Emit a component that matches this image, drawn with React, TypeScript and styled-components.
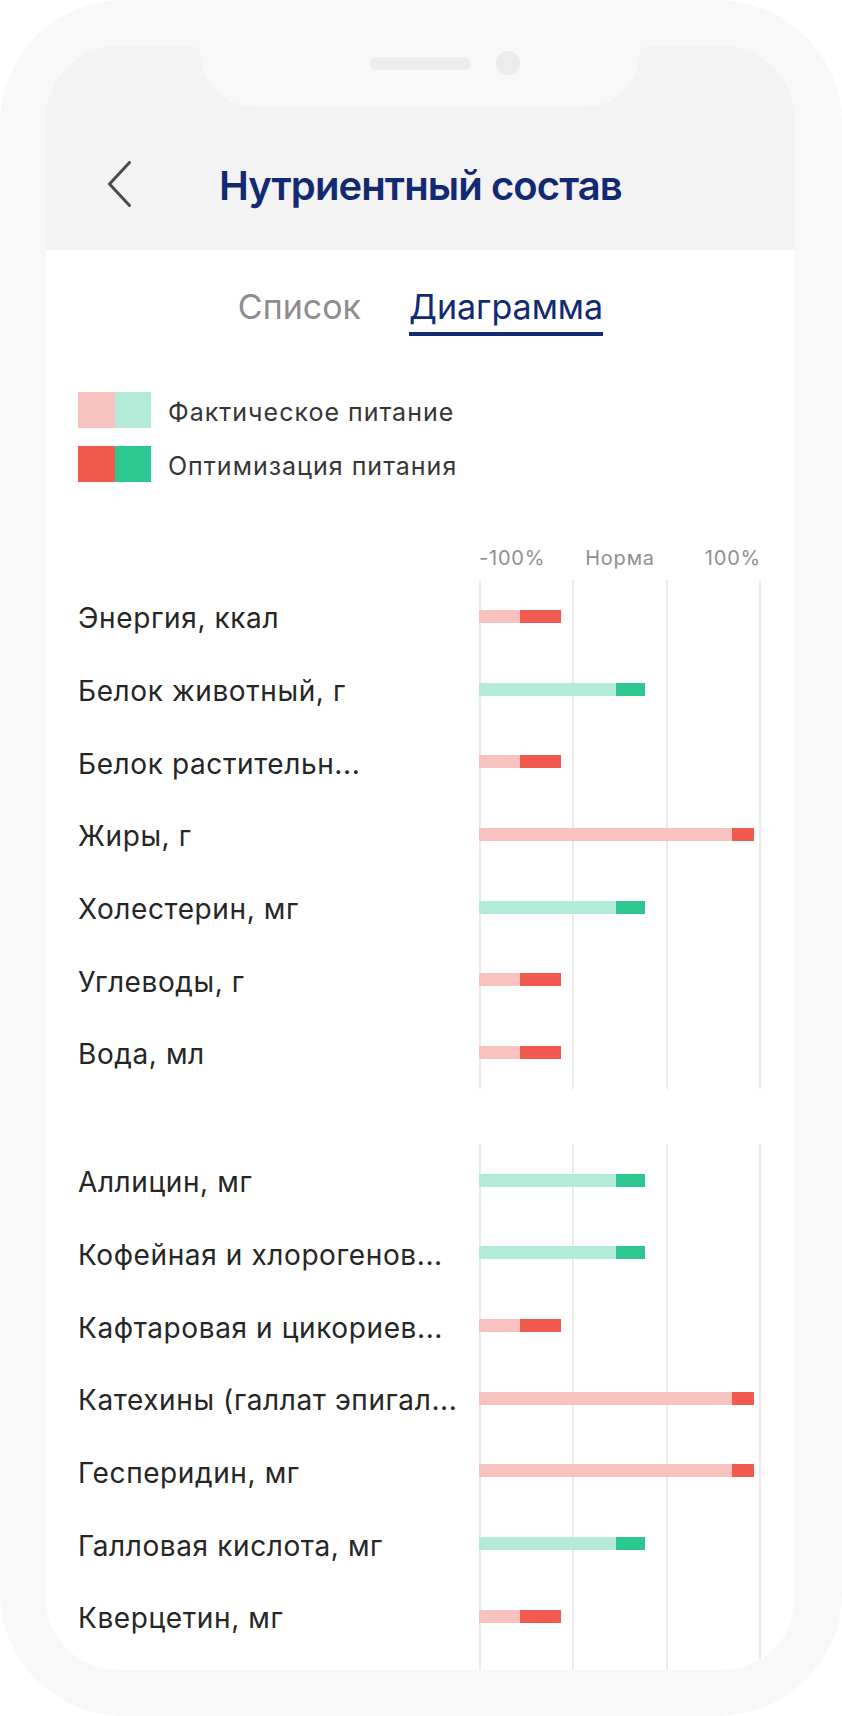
import React from 'react'
import styled, { createGlobalStyle } from 'styled-components'

const NAVY = '#112a72'
const FONT = 'Inter, "Noto Sans", sans-serif'

const GlobalStyle = createGlobalStyle`
  html, body {
    margin: 0;
    padding: 0;
    background: #fff;
  }
  body {
    font-family: ${FONT};
    -webkit-font-smoothing: antialiased;
  }
`

const Phone = styled.div`
  box-sizing: border-box;
  width: 842px;
  height: 1716px;
  padding: 46px 47px 46px 46px;
  background: #f8f8f8;
  border-radius: 124px;
`

const Screen = styled.div`
  position: relative;
  display: flex;
  flex-direction: column;
  height: 100%;
  background: #fff;
  border-radius: 72px;
  overflow: hidden;
`

const Notch = styled.div`
  position: absolute;
  top: 0;
  left: 155px;
  box-sizing: border-box;
  width: 438px;
  height: 60px;
  padding-top: 5px;
  display: grid;
  grid-template-columns: 1fr auto 1fr;
  align-items: start;
  background: #f8f8f8;
  border-radius: 0 0 52px 52px;

  &::before,
  &::after {
    content: '';
    position: absolute;
    top: 0;
    width: 10px;
    height: 10px;
  }
  &::before {
    left: -10px;
    background: radial-gradient(circle at 0 100%, transparent 9.5px, #f8f8f8 10px);
  }
  &::after {
    right: -10px;
    background: radial-gradient(circle at 100% 100%, transparent 9.5px, #f8f8f8 10px);
  }
`

const Speaker = styled.span`
  grid-column: 2;
  width: 101px;
  height: 13px;
  margin-top: 6px;
  border-radius: 7px;
  background: #ececec;
`

const Camera = styled.span`
  grid-column: 3;
  justify-self: start;
  width: 24px;
  height: 24px;
  margin-left: 25px;
  border-radius: 50%;
  background: #ececec;
`

const Header = styled.header`
  display: flex;
  align-items: center;
  flex-shrink: 0;
  box-sizing: border-box;
  height: 204px;
  padding: 72px 0 0 61px;
  background: #f3f3f3;
`

const BackButton = styled.button`
  display: flex;
  padding: 0;
  border: none;
  background: none;
  cursor: pointer;
`

const Title = styled.h1`
  margin: 4px 0 0 88px;
  font-family: ${FONT};
  font-weight: 600;
  font-size: 40px;
  line-height: 48px;
  letter-spacing: -0.9px;
  color: ${NAVY};
`

const Tabs = styled.nav`
  display: flex;
  justify-content: center;
  gap: 48px;
  padding-top: 37px;
`

const Tab = styled.button<{ $active?: boolean }>`
  margin: 0;
  padding: 0 0 5px;
  border: none;
  border-bottom: 4px solid ${({ $active }) => ($active ? NAVY : 'transparent')};
  background: none;
  font-family: ${FONT};
  font-size: 34px;
  line-height: 40px;
  color: ${({ $active }) => ($active ? NAVY : '#8d8d8d')};
  cursor: pointer;
`

const Legend = styled.div`
  display: flex;
  flex-direction: column;
  gap: 18px;
  margin: 56px 0 0 32px;
`

const LegendRow = styled.div`
  display: flex;
  align-items: center;
  gap: 17px;
  height: 36px;
`

const LegendText = styled.span`
  padding-top: 4px;
  font-size: 25px;
  letter-spacing: 1px;
  color: #363636;
`

const Swatch = styled.span`
  display: flex;
  width: 73px;
  height: 36px;
`

const SwatchPart = styled.span<{ $color: string }>`
  flex: 1;
  background: ${({ $color }) => $color};
`

const Chart = styled.section`
  display: flex;
  flex-direction: column;
  flex: 1;
  margin-top: 64px;
  padding-left: 32px;
`

const Scale = styled.div`
  display: grid;
  grid-template-columns: 401px 282px;
  margin-bottom: 10px;
`

const ScaleTicks = styled.div`
  grid-column: 2;
  display: grid;
  grid-template-columns: 1fr auto 1fr;
  font-size: 20px;
  line-height: 24px;
  letter-spacing: 0.8px;
  color: #8f8f8f;
`

const Tick = styled.span<{ $align: 'start' | 'center' | 'end' }>`
  justify-self: ${({ $align }) => $align};
`

const Group = styled.div<{ $grow?: boolean }>`
  display: grid;
  grid-template-columns: 401px 282px;
  grid-auto-rows: 72.7px;
  align-items: center;
  align-content: start;
  background-image: linear-gradient(#ebebeb, #ebebeb), linear-gradient(#ebebeb, #ebebeb),
    linear-gradient(#ebebeb, #ebebeb), linear-gradient(#ebebeb, #ebebeb);
  background-size: 2px 100%;
  background-position: 401px 0, 494px 0, 588px 0, 681px 0;
  background-repeat: no-repeat;
  flex: ${({ $grow }) => ($grow ? 1 : 'none')};

  & + & {
    margin-top: 55px;
  }
`

const Label = styled.span`
  overflow: hidden;
  padding-top: 4px;
  white-space: nowrap;
  font-size: 28px;
  line-height: 34px;
  letter-spacing: 0.6px;
  color: #262626;
`

const Track = styled.div`
  display: flex;
  height: 13px;
`

const Segment = styled.span<{ $color: string }>`
  height: 100%;
  background: ${({ $color }) => $color};
`

const COLORS = {
  red: { light: '#f8c3bf', strong: '#f25a4f' },
  green: { light: '#b4ebd8', strong: '#2dc88f' },
}

type Level = 'short' | 'mid' | 'full'
type Tone = keyof typeof COLORS

const LEVELS: Record<Level, [number, number]> = {
  short: [41, 41],
  mid: [137, 29],
  full: [253, 22],
}

interface Nutrient {
  name: string
  tone: Tone
  level: Level
}

const MACROS: Nutrient[] = [
  { name: 'Энергия, ккал', tone: 'red', level: 'short' },
  { name: 'Белок животный, г', tone: 'green', level: 'mid' },
  { name: 'Белок растительн...', tone: 'red', level: 'short' },
  { name: 'Жиры, г', tone: 'red', level: 'full' },
  { name: 'Холестерин, мг', tone: 'green', level: 'mid' },
  { name: 'Углеводы, г', tone: 'red', level: 'short' },
  { name: 'Вода, мл', tone: 'red', level: 'short' },
]

const PHYTO: Nutrient[] = [
  { name: 'Аллицин, мг', tone: 'green', level: 'mid' },
  { name: 'Кофейная и хлорогенов...', tone: 'green', level: 'mid' },
  { name: 'Кафтаровая и цикориев...', tone: 'red', level: 'short' },
  { name: 'Катехины (галлат эпигал...', tone: 'red', level: 'full' },
  { name: 'Гесперидин, мг', tone: 'red', level: 'full' },
  { name: 'Галловая кислота, мг', tone: 'green', level: 'mid' },
  { name: 'Кверцетин, мг', tone: 'red', level: 'short' },
]

const ChevronLeft = () => (
  <svg width="24" height="46" viewBox="0 0 24 46" fill="none">
    <polyline
      points="22.5,1.5 2.5,23 22.5,44.5"
      stroke="#4b4b4b"
      strokeWidth="3"
      strokeLinecap="round"
      strokeLinejoin="round"
    />
  </svg>
)

const NutrientRows = ({ items }: { items: Nutrient[] }) => (
  <>
    {items.map(({ name, tone, level }) => {
      const [light, strong] = LEVELS[level]
      return (
        <React.Fragment key={name}>
          <Label>{name}</Label>
          <Track>
            <Segment $color={COLORS[tone].light} style={{ width: light }} />
            <Segment $color={COLORS[tone].strong} style={{ width: strong }} />
          </Track>
        </React.Fragment>
      )
    })}
  </>
)

export default function App() {
  return (
    <>
      <GlobalStyle />
      <Phone>
        <Screen>
          <Header>
            <BackButton aria-label="Назад">
              <ChevronLeft />
            </BackButton>
            <Title>Нутриентный состав</Title>
          </Header>
          <Notch>
            <Speaker />
            <Camera />
          </Notch>

          <Tabs>
            <Tab>Список</Tab>
            <Tab $active>Диаграмма</Tab>
          </Tabs>

          <Legend>
            <LegendRow>
              <Swatch>
                <SwatchPart $color={COLORS.red.light} />
                <SwatchPart $color={COLORS.green.light} />
              </Swatch>
              <LegendText>Фактическое питание</LegendText>
            </LegendRow>
            <LegendRow>
              <Swatch>
                <SwatchPart $color={COLORS.red.strong} />
                <SwatchPart $color={COLORS.green.strong} />
              </Swatch>
              <LegendText>Оптимизация питания</LegendText>
            </LegendRow>
          </Legend>

          <Chart>
            <Scale>
              <ScaleTicks>
                <Tick $align="start">-100%</Tick>
                <Tick $align="center">Норма</Tick>
                <Tick $align="end">100%</Tick>
              </ScaleTicks>
            </Scale>
            <Group>
              <NutrientRows items={MACROS} />
            </Group>
            <Group $grow>
              <NutrientRows items={PHYTO} />
            </Group>
          </Chart>
        </Screen>
      </Phone>
    </>
  )
}
